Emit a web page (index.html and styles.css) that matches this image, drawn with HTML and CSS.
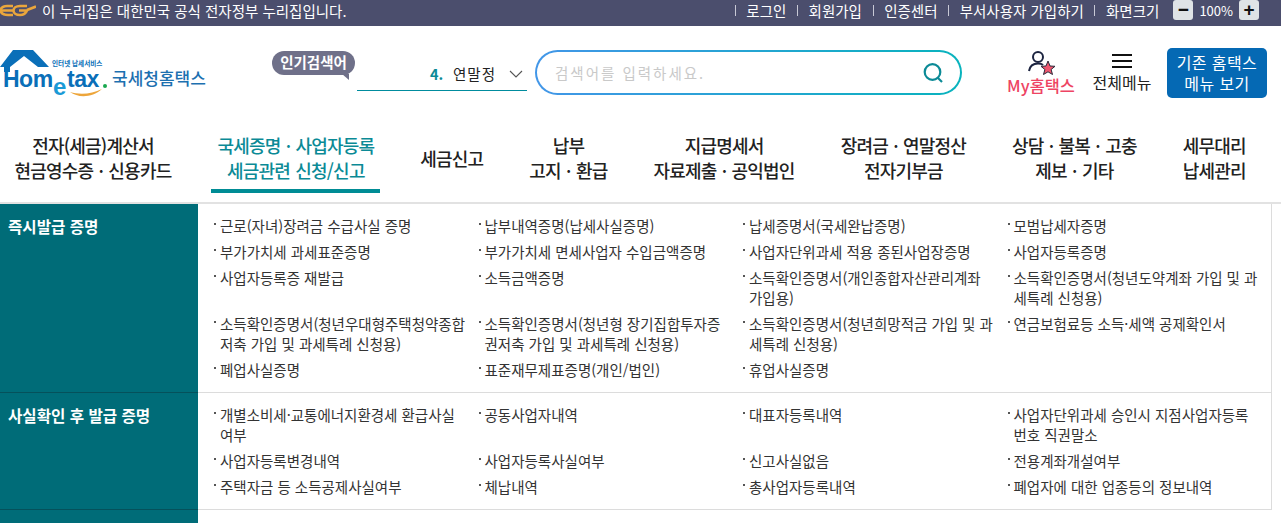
FILE: index.html
```html
<!DOCTYPE html>
<html lang="ko">

<head>
    <meta charset="UTF-8">
    <title>국세청홈택스</title>
    <link rel="stylesheet" href="styles.css">
</head>

<body>
    <div class="gov-bar">
        <div class="gov-notice">
            <svg class="gov-mark" width="36" height="16" viewBox="0 2 36 16" fill="none" stroke="#eaa63c" stroke-width="2.600">
                <path d="M13 6H7C4 6 1 8 0 10.500H13M0 10.500C1 13 4 15 8 15H13"/>
                <path d="M27 6H20C16 6 13.500 8 13.500 10.500C13.500 13 16 15 20 15C24 15 26 13 27 10.500H19M27 10L36 6.500"/>
            </svg>
            <span>이 누리집은 대한민국 공식 전자정부 누리집입니다.</span>
        </div>
        <div class="gov-links">
            <a>로그인</a>
            <a>회원가입</a>
            <a>인증센터</a>
            <a>부서사용자 가입하기</a>
            <a>화면크기</a>
            <div class="zoom-ctl">
                <button class="zoom-btn">&minus;</button>
                <span>100%</span>
                <button class="zoom-btn">+</button>
            </div>
        </div>
    </div>

    <header class="top-head">
        <div class="logo">
            <svg width="108" height="50" viewBox="0 0 108 50">
                <path d="M0 18L13 1H33L49 18H38L24 7L10 18V23H4V18Z" fill="#0a6fb8"/>
                <text x="52" y="16.500" class="logo-sub">인터넷 납세서비스</text>
                <text x="3" y="38" class="logo-word">Hom</text>
                <text x="53" y="46" class="logo-e">e</text>
                <text x="67" y="38" class="logo-word">tax</text>
                <circle cx="105" cy="37" r="2" fill="#1aa84f"/>
                <path d="M70 43C78 49 92 49 102 40C92 45 80 46 70 43Z" fill="#eda53a"/>
            </svg>
            <span class="logo-name">국세청홈택스</span>
        </div>

        <div class="popular">
            <span class="bubble">인기검색어</span>
            <div class="popular-pick">
                <b>4.</b>
                <span>연말정</span>
                <svg width="14" height="8" viewBox="0 0 14 8" fill="none" stroke="#555" stroke-width="1.100"><path d="M1 1L7 7L13 1"/></svg>
            </div>
        </div>

        <div class="search-box">
            <span class="search-hint">검색어를 입력하세요.</span>
            <svg width="22" height="22" viewBox="0 0 22 22" fill="none" stroke="#0b8a96" stroke-width="2.200">
                <circle cx="10.500" cy="10" r="7.800"/>
                <path d="M16 16L20 20"/>
            </svg>
        </div>

        <a class="my-link">
            <svg width="28" height="24" viewBox="0 0 28 24">
                <circle cx="11" cy="6" r="5" fill="none" stroke="#1c2440" stroke-width="2"/>
                <path d="M2 20C3 14 7 12.500 11 12.500C13 12.500 15 13 16 14" fill="none" stroke="#1c2440" stroke-width="2"/>
                <path d="M21 10L23 15L28 15.300L24.100 18.500L25.500 23.500L21 20.800L16.500 23.500L17.900 18.500L14 15.300L19 15Z" fill="#f0566f" stroke="#2a2a3a" stroke-width="1"/>
            </svg>
            <span>My홈택스</span>
        </a>

        <a class="all-menu">
            <span class="burger"><i></i><i></i><i></i></span>
            <span>전체메뉴</span>
        </a>

        <a class="old-menu">기존 홈택스<br>메뉴 보기</a>
    </header>

    <nav class="main-nav">
        <a>전자(세금)계산서<br>현금영수증 · 신용카드</a>
        <a class="on">국세증명 · 사업자등록<br>세금관련 신청/신고</a>
        <a>세금신고</a>
        <a>납부<br>고지 · 환급</a>
        <a>지급명세서<br>자료제출 · 공익법인</a>
        <a>장려금 · 연말정산<br>전자기부금</a>
        <a>상담 · 불복 · 고충<br>제보 · 기타</a>
        <a>세무대리<br>납세관리</a>
    </nav>

    <main class="sub-menu">
        <section class="group">
            <h2>즉시발급 증명</h2>
            <ul>
                <li>근로(자녀)장려금 수급사실 증명</li>
                <li>납부내역증명(납세사실증명)</li>
                <li>납세증명서(국세완납증명)</li>
                <li>모범납세자증명</li>
                <li>부가가치세 과세표준증명</li>
                <li>부가가치세 면세사업자 수입금액증명</li>
                <li>사업자단위과세 적용 종된사업장증명</li>
                <li>사업자등록증명</li>
                <li>사업자등록증 재발급</li>
                <li>소득금액증명</li>
                <li>소득확인증명서(개인종합자산관리계좌 가입용)</li>
                <li>소득확인증명서(청년도약계좌 가입 및 과세특례 신청용)</li>
                <li>소득확인증명서(청년우대형주택청약종합저축 가입 및 과세특례 신청용)</li>
                <li>소득확인증명서(청년형 장기집합투자증권저축 가입 및 과세특례 신청용)</li>
                <li>소득확인증명서(청년희망적금 가입 및 과세특례 신청용)</li>
                <li>연금보험료등 소득·세액 공제확인서</li>
                <li>폐업사실증명</li>
                <li>표준재무제표증명(개인/법인)</li>
                <li>휴업사실증명</li>
            </ul>
        </section>
        <section class="group">
            <h2>사실확인 후 발급 증명</h2>
            <ul>
                <li>개별소비세·교통에너지환경세 환급사실 여부</li>
                <li>공동사업자내역</li>
                <li>대표자등록내역</li>
                <li>사업자단위과세 승인시 지점사업자등록 번호 직권말소</li>
                <li>사업자등록변경내역</li>
                <li>사업자등록사실여부</li>
                <li>신고사실없음</li>
                <li>전용계좌개설여부</li>
                <li>주택자금 등 소득공제사실여부</li>
                <li>체납내역</li>
                <li>총사업자등록내역</li>
                <li>폐업자에 대한 업종등의 정보내역</li>
            </ul>
        </section>
        <div class="group-tail"></div>
    </main>
</body>

</html>
```
FILE: styles.css
```css
* {
    box-sizing: border-box;
}

html,
body {
    height: 100%;
}

body {
    margin: 0;
    overflow: hidden;
    font-family: "Noto Sans CJK KR", "Noto Sans", sans-serif;
    color: #222;
    background-color: #fff;
}

ul {
    margin: 0;
    padding: 0;
    list-style: none;
}

/* top strip */
.gov-bar {
    height: 26px;
    display: flex;
    justify-content: space-between;
    align-items: center;
    padding: 0 22px 6px 0;
    background-color: #4b4e6d;
    color: #fff;
    font-size: 14.500px;
}

.gov-notice {
    display: flex;
    align-items: center;
    gap: 6px;
}

.gov-links {
    display: flex;
    align-items: center;
}

.gov-links a {
    display: flex;
    align-items: center;
}

.gov-links a::before {
    content: "";
    width: 1px;
    height: 11px;
    margin: 0 10.600px;
    background-color: #c8c9d6;
}

.zoom-ctl {
    display: flex;
    align-items: center;
    gap: 6px;
    margin-left: 14px;
    font-size: 13px;
}

.zoom-btn {
    width: 20px;
    height: 20px;
    padding: 0;
    border: none;
    border-radius: 3px;
    background-color: #dfe3e6;
    color: #111;
    font-size: 19px;
    font-weight: 700;
    line-height: 20px;
    font-family: "Liberation Sans", sans-serif;
}

/* logo, search, shortcuts */
.top-head {
    height: 84px;
    display: flex;
    align-items: flex-start;
}

.logo {
    width: 272px;
    padding-top: 23px;
    display: flex;
    align-items: flex-start;
}

.logo svg {
    flex: none;
}

.logo-sub {
    font-size: 6.600px;
    font-weight: 700;
    fill: #0a6fb8;
}

.logo-word {
    font-family: "Liberation Sans", sans-serif;
    font-size: 23px;
    font-weight: 700;
    letter-spacing: -0.500px;
    fill: #0a6fb8;
}

.logo-e {
    font-family: "Liberation Sans", sans-serif;
    font-size: 24px;
    font-weight: 700;
    fill: #1a9ad6;
}

.logo-name {
    margin: 16px 0 0 4px;
    font-size: 17px;
    font-weight: 500;
    color: #1d70b0;
    white-space: nowrap;
}

.popular {
    width: 255px;
    margin-top: 25px;
    display: flex;
    align-items: flex-start;
}

.bubble {
    position: relative;
    flex: none;
    width: 83px;
    height: 24px;
    border-radius: 12px;
    background-color: #6f7089;
    color: #fff;
    font-size: 14.500px;
    font-weight: 700;
    line-height: 22px;
    text-align: center;
}

.bubble::after {
    content: "";
    position: absolute;
    right: 6px;
    bottom: -5px;
    border-top: 6px solid #6f7089;
    border-left: 7px solid transparent;
}

.popular-pick {
    width: 170px;
    height: 40px;
    margin-left: 2px;
    padding: 6px 4px 0 73px;
    display: flex;
    align-items: center;
    border-bottom: 1px solid #008c9e;
    font-size: 14.500px;
}

.popular-pick b {
    width: 23px;
    color: #0b8a96;
}

.popular-pick span {
    letter-spacing: 1px;
}

.popular-pick svg {
    margin-left: 13px;
}

.search-box {
    width: 427px;
    height: 45px;
    margin: 24px 0 0 8px;
    padding: 0 16px 0 18px;
    display: flex;
    justify-content: space-between;
    align-items: center;
    border: 2px solid transparent;
    border-radius: 23px;
    background: linear-gradient(#fff, #fff) padding-box, linear-gradient(90deg, #4296e8, #08b3bd) border-box;
}

.search-hint {
    color: #c9c9c9;
    font-size: 14.500px;
    letter-spacing: 2px;
}

.my-link {
    margin: 25px 0 0 45px;
    width: 68px;
    display: flex;
    flex-direction: column;
    align-items: center;
    color: #ee4463;
    font-size: 16.400px;
    font-weight: 500;
    line-height: 20px;
    white-space: nowrap;
}

.all-menu {
    margin: 28px 0 0 17px;
    width: 60px;
    display: flex;
    flex-direction: column;
    align-items: center;
    gap: 4px;
    color: #222;
    font-size: 16px;
    line-height: 20px;
    white-space: nowrap;
}

.burger {
    width: 20px;
    display: flex;
    flex-direction: column;
    gap: 4px;
}

.burger i {
    height: 2px;
    background-color: #111;
}

.old-menu {
    width: 100px;
    height: 50px;
    margin: 22px 0 0 15px;
    padding-top: 4px;
    border-radius: 5px;
    background-color: #0569b4;
    color: #fff;
    font-size: 16px;
    line-height: 21px;
    letter-spacing: 0.400px;
    text-align: center;
}

/* main categories */
.main-nav {
    height: 94px;
    padding: 17px 0 0 8.500px;
    display: flex;
    align-items: flex-start;
    gap: 34px;
    border-bottom: 2px solid #e2e2e2;
}

.main-nav a {
    height: 66px;
    padding: 0 6px;
    display: flex;
    align-items: center;
    border-bottom: 4px solid transparent;
    font-size: 18px;
    font-weight: 500;
    line-height: 25px;
    letter-spacing: -0.800px;
    word-spacing: 1px;
    text-align: center;
    color: #222;
    white-space: nowrap;
}

.main-nav a.on {
    color: #0b8a96;
    border-bottom-color: #008c95;
}

/* submenu groups */
.group {
    display: grid;
    grid-template-columns: 198px 1fr;
    border-bottom: 1px solid #dcdcdc;
    margin-right: 9px;
    border-right: 1px solid #dcdcdc;
}

.group h2 {
    margin: 0 0 -1px;
    padding: 11px 8px 0;
    background-color: #006c78;
    color: #fff;
    font-size: 15.600px;
    font-weight: 700;
    line-height: 22px;
    border-bottom: 1px solid #05515b;
}

.group ul {
    padding: 12px 0 12px 16px;
    display: grid;
    grid-template-columns: repeat(4, 264.500px);
    gap: 6px 0;
}

.group li {
    position: relative;
    padding: 0 13px 0 6px;
    font-size: 14.500px;
    line-height: 20px;
    color: #333;
}

.group li::before {
    content: "";
    position: absolute;
    left: 0;
    top: 7px;
    width: 2px;
    height: 2px;
    background-color: #555;
}

/* next group, only its head shows above the fold */
.group-tail {
    width: 198px;
    height: 13px;
    background-color: #006c78;
}
```
